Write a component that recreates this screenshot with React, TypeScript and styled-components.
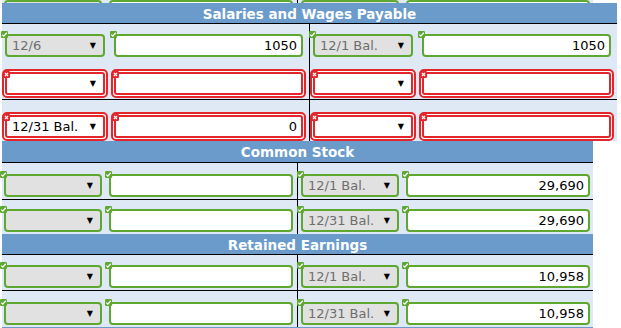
import React from "react";
import styled, { createGlobalStyle, css } from "styled-components";

const Global = createGlobalStyle`
  html, body { margin: 0; padding: 0; background: #fff; }
  body { font-family: "DejaVu Sans", Verdana, sans-serif; }
  *, *::before, *::after { box-sizing: border-box; }
`;

type Variant = "wide" | "narrow";
type State = "ok" | "bad";

const dims = {
  wide: { width: 615, half: 307, padL: 3, padR: 3, select: 100, gap: 9, input: 189 },
  narrow: { width: 591, half: 295, padL: 2, padR: 3, select: 98, gap: 7, input: 184 },
};

const GREEN = "#5ea832";
const RED = "#e3262b";

const Page = styled.div`
  width: 621px;
  height: 328px;
  overflow: hidden;
  padding-left: 2px;
`;

const Clip = styled.div`
  height: 3px;
  overflow: hidden;
`;

const Table = styled.section<{ $v: Variant }>`
  width: ${(p) => dims[p.$v].width}px;
  background: #dfe9f5;
`;

const Header = styled.div<{ $h: number }>`
  height: ${(p) => p.$h}px;
  background: #6a9bcb;
  border-bottom: 1px solid #000;
  color: #fff;
  font-weight: bold;
  font-size: 13.5px;
  display: flex;
  align-items: center;
  justify-content: center;
  padding-top: 1px;
`;

const Row = styled.div<{ $v: Variant; $h: number; $line?: boolean }>`
  display: grid;
  grid-template-columns: ${(p) => dims[p.$v].half}px 1fr;
  height: ${(p) => p.$h}px;
  border-bottom: ${(p) => (p.$line ? "1px solid #000" : "0")};
`;

const Half = styled.div<{ $v: Variant; $pb: number; $divider?: boolean }>`
  display: flex;
  align-items: flex-end;
  gap: ${(p) => dims[p.$v].gap}px;
  padding: 0 0 ${(p) => p.$pb}px ${(p) => (p.$divider ? dims[p.$v].padR : dims[p.$v].padL)}px;
  border-left: ${(p) => (p.$divider ? "1px solid #000" : "0")};
`;

const Field = styled.div<{ $s: State; $w: number }>`
  position: relative;
  flex: none;
  width: ${(p) => p.$w}px;
  height: 23px;
  ${(p) =>
    p.$s === "bad" &&
    css`
      width: ${p.$w + 6}px;
      height: 29px;
      margin: -3px;
      padding: 1px;
      border: 2px solid ${RED};
      border-radius: 5px;
      background: #fff;
    `}
`;

const Badge = styled.span<{ $s: State }>`
  position: absolute;
  left: ${(p) => (p.$s === "ok" ? -4 : -1)}px;
  top: ${(p) => (p.$s === "ok" ? -3 : 0)}px;
  width: 7px;
  height: 7px;
  line-height: 0;
  z-index: 2;
`;

const SelectBox = styled.div<{ $s: State; $disabled?: boolean }>`
  width: 100%;
  height: 100%;
  border: 2px solid ${(p) => (p.$s === "ok" ? GREEN : RED)};
  border-radius: ${(p) => (p.$s === "ok" ? 4 : 3)}px;
  background: ${(p) => (p.$disabled ? "#e1e1e1" : "#fff")};
  color: ${(p) => (p.$disabled ? "#6e6e6e" : "#000")};
  display: flex;
  align-items: center;
  justify-content: space-between;
  padding: 0 7px 0 5px;
  font-size: 13px;
  white-space: nowrap;
`;

const Arrow = styled.span`
  font-size: 8px;
  color: #000;
`;

const InputBox = styled.input<{ $s: State }>`
  display: block;
  width: 100%;
  height: 100%;
  margin: 0;
  border: 2px solid ${(p) => (p.$s === "ok" ? GREEN : RED)};
  border-radius: ${(p) => (p.$s === "ok" ? 4 : 3)}px;
  background: #fff;
  color: #000;
  text-align: right;
  padding: 0 4px;
  font-family: "DejaVu Sans", Verdana, sans-serif;
  font-size: 13px;
  outline: none;
`;

const Check = () => (
  <svg width="7" height="7" viewBox="0 0 7 7">
    <rect width="7" height="7" rx="1.2" fill={GREEN} />
    <path d="M1.3 3.6 L2.8 5.1 L5.8 1.8" stroke="#fff" strokeWidth="1.3" fill="none" />
  </svg>
);

const Cross = () => (
  <svg width="7" height="7" viewBox="0 0 7 7">
    <rect width="7" height="7" rx="1.2" fill={RED} />
    <path d="M2 2 L5 5 M5 2 L2 5" stroke="#fff" strokeWidth="1.2" fill="none" />
  </svg>
);

type Cell = { s: State; label?: string; disabled?: boolean };

const Select: React.FC<{ v: Variant; c: Cell; bare?: boolean }> = ({ v, c, bare }) => (
  <Field $s={c.s} $w={dims[v].select}>
    {!bare && <Badge $s={c.s}>{c.s === "ok" ? <Check /> : <Cross />}</Badge>}
    <SelectBox $s={c.s} $disabled={c.disabled}>
      {!bare && (
        <>
          <span>{c.label ?? ""}</span>
          <Arrow>▼</Arrow>
        </>
      )}
    </SelectBox>
  </Field>
);

const Input: React.FC<{ v: Variant; s: State; value?: string; bare?: boolean }> = ({
  v,
  s,
  value,
  bare,
}) => (
  <Field $s={s} $w={dims[v].input}>
    {!bare && <Badge $s={s}>{s === "ok" ? <Check /> : <Cross />}</Badge>}
    <InputBox $s={s} readOnly value={value ?? ""} />
  </Field>
);

type Side = { sel: Cell; inp: { s: State; value?: string } };
type RowData = { h: number; pb: number; line?: boolean; left: Side; right: Side };

const TRow: React.FC<{ v: Variant; r: RowData; bare?: boolean }> = ({ v, r, bare }) => (
  <Row $v={v} $h={r.h} $line={r.line}>
    <Half $v={v} $pb={r.pb}>
      <Select v={v} c={r.left.sel} bare={bare} />
      <Input v={v} s={r.left.inp.s} value={r.left.inp.value} bare={bare} />
    </Half>
    <Half $v={v} $pb={r.pb} $divider>
      <Select v={v} c={r.right.sel} bare={bare} />
      <Input v={v} s={r.right.inp.s} value={r.right.inp.value} bare={bare} />
    </Half>
  </Row>
);

const okSel = (label?: string): Cell => ({ s: "ok", label, disabled: true });
const badSel = (label?: string): Cell => ({ s: "bad", label });

const salaries: RowData[] = [
  {
    h: 38,
    pb: 5,
    left: { sel: okSel("12/6"), inp: { s: "ok", value: "1050" } },
    right: { sel: okSel("12/1 Bal."), inp: { s: "ok", value: "1050" } },
  },
  {
    h: 38,
    pb: 4,
    line: true,
    left: { sel: badSel(), inp: { s: "bad" } },
    right: { sel: badSel(), inp: { s: "bad" } },
  },
  {
    h: 41,
    pb: 3,
    left: { sel: badSel("12/31 Bal."), inp: { s: "bad", value: "0" } },
    right: { sel: badSel(), inp: { s: "bad" } },
  },
];

const balanceRows = (amount: string, h1: number, h2: number): RowData[] => [
  {
    h: h1,
    pb: 2,
    line: true,
    left: { sel: okSel(), inp: { s: "ok" } },
    right: { sel: okSel("12/1 Bal."), inp: { s: "ok", value: amount } },
  },
  {
    h: h2,
    pb: 2,
    left: { sel: okSel(), inp: { s: "ok" } },
    right: { sel: okSel("12/31 Bal."), inp: { s: "ok", value: amount } },
  },
];

const topRow: RowData = {
  h: 3,
  pb: 0,
  left: { sel: okSel(), inp: { s: "ok" } },
  right: { sel: okSel(), inp: { s: "ok" } },
};

export default function App() {
  return (
    <>
      <Global />
      <Page>
        <Clip>
          <Table $v="narrow">
            <TRow v="narrow" r={topRow} bare />
          </Table>
        </Clip>

        <Table $v="wide">
          <Header $h={21}>Salaries and Wages Payable</Header>
          {salaries.map((r, i) => (
            <TRow key={i} v="wide" r={r} />
          ))}
        </Table>

        <Table $v="narrow">
          <Header $h={22}>Common Stock</Header>
          {balanceRows("29,690", 37, 34).map((r, i) => (
            <TRow key={i} v="narrow" r={r} />
          ))}
        </Table>

        <Table $v="narrow">
          <Header $h={21}>Retained Earnings</Header>
          {balanceRows("10,958", 36, 36).map((r, i) => (
            <TRow key={i} v="narrow" r={r} />
          ))}
        </Table>

        <Table $v="narrow">
          <Header $h={21} />
        </Table>
      </Page>
    </>
  );
}
